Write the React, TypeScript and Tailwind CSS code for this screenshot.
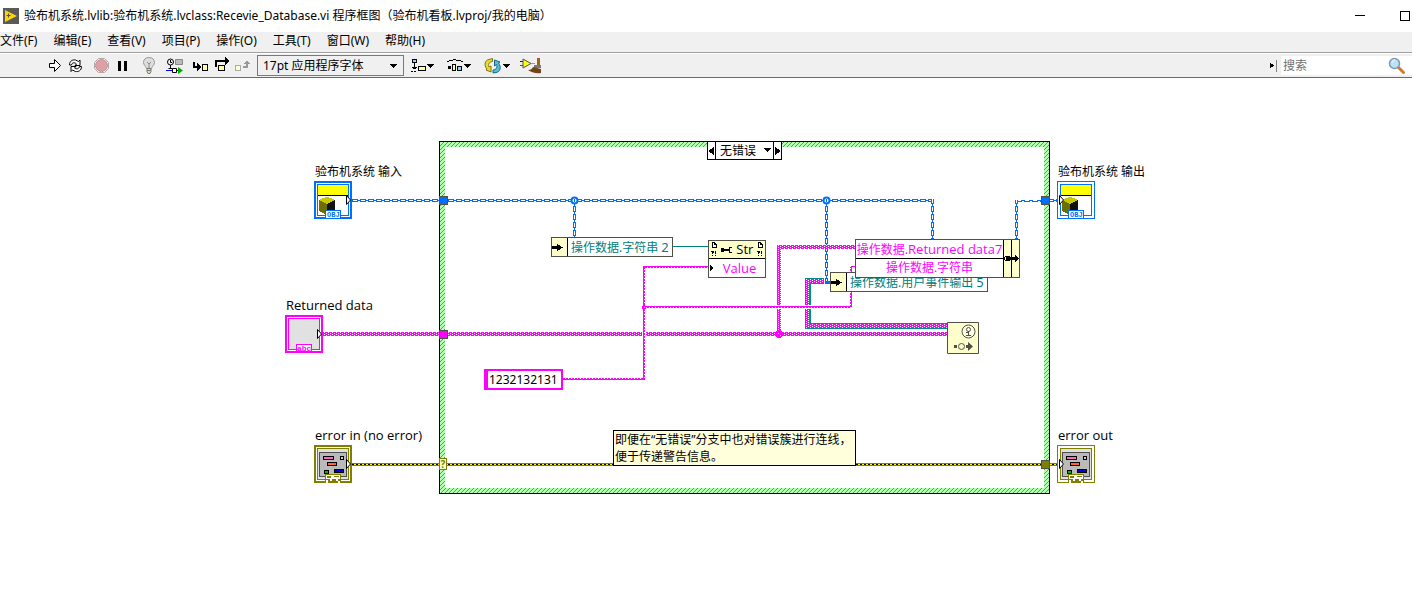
import React from 'react'

const MENUS = ['文件(F)', '编辑(E)', '查看(V)', '项目(P)', '操作(O)', '工具(T)', '窗口(W)', '帮助(H)']

type IconProps = { w: number; h?: number; smooth?: boolean; children: React.ReactNode }

function Icon({ w, h = 18, smooth, children }: IconProps) {
  return (
    <svg width={w} height={h} viewBox={`0 0 ${w} ${h}`} fill="none" shapeRendering={smooth ? 'auto' : 'crispEdges'} className="block shrink-0">
      {children}
    </svg>
  )
}

function Caret() {
  return <path d="M0 0h7v1H0zM1 1h5v1H1zM2 2h3v1H2zM3 3h1v1H3z" fill="#000" />
}

function TitleBar() {
  return (
    <header className="flex h-8 items-center bg-white pl-[3px] pr-0.5">
      <Icon w={16} h={16} smooth>
        <path d="M0 0h16v16H0z" fill="#5a5a5a" />
        <path d="M2 2v12l12-6z" fill="#ffd500" />
        <path d="M3.5 7.5h4M5.5 5.5v4" stroke="#4d5560" />
      </Icon>
      <h1 className="ml-[5px] flex-1 whitespace-nowrap text-[12px]">
        验布机系统.lvlib:验布机系统.lvclass:Recevie_Database.vi 程序框图（验布机看板.lvproj/我的电脑）
      </h1>
      <button aria-label="最小化" className="mr-[35px]">
        <Icon w={10} h={10}><path d="M0 4h10v1H0z" fill="#000" /></Icon>
      </button>
      <button aria-label="最大化">
        <Icon w={10} h={10}><path d="M.5 .5h9v9h-9z" stroke="#000" /></Icon>
      </button>
    </header>
  )
}

function MenuBar() {
  return (
    <nav className="flex h-[21px] items-center gap-4 border-b border-[#a0a0a0] bg-[#f0f0f0] pb-0.5 text-[12px]">
      {MENUS.map((m) => (
        <button key={m} className="whitespace-nowrap">{m}</button>
      ))}
    </nav>
  )
}

function Toolbar() {
  return (
    <div className="flex h-[25px] items-center border-b border-b-[#696969] border-t border-t-white bg-[#f0f0f0] pl-12">
      <button aria-label="运行">
        <Icon w={14} smooth>
          <path d="M1.5 6.5h5v-4l6 6-6 6v-4h-5z" fill="#fff" stroke="#000" />
        </Icon>
      </button>
      <button aria-label="连续运行" className="ml-[5px]">
        <Icon w={17} smooth>
          <path d="M2.5 8c0-4 3-5.500 6-5l3 1.500 1.500-1.500v5.500H8l1.500-1.500C7.500 5 5 5.500 4.500 8z" fill="#fff" stroke="#000" />
          <path d="M14.500 9.500c0 4-3 5.500-6 5l-3-1.500L4 14.500V9.500h5L7.500 11c2 1.500 4.500 1 5-1.500z" fill="#fff" stroke="#000" />
        </Icon>
      </button>
      <button aria-label="中止执行" className="ml-[9px]">
        <Icon w={17} smooth>
          <path d="M5.500 1.500h6l4 4v6l-4 4h-6l-4-4v-6z" fill="#fff" stroke="#aaa" />
          <circle cx="8.500" cy="8.500" r="6" fill="#dda0a4" stroke="#c98f94" />
        </Icon>
      </button>
      <button aria-label="暂停" className="ml-2">
        <Icon w={10}><path d="M0 4h3v10H0zM6 4h3v10H6z" fill="#000" /></Icon>
      </button>
      <button aria-label="高亮显示执行过程" className="ml-[14px]">
        <Icon w={14} smooth>
          <path d="M7 .5c-3.500 0-5.500 2-5.500 5 0 2.500 2 3 3 6h5c1-3 3-3.500 3-6 0-3-2-5-5.500-5z" fill="#ddd" stroke="#999" />
          <path d="M5 5l2 2 2-2M7 7v4" stroke="#888" />
          <path d="M5 11.500h4v3l-1 2H6l-1-2z" fill="#e8dca0" stroke="#777" />
          <path d="M5 13.500h4" stroke="#777" />
        </Icon>
      </button>
      <button aria-label="保存连线值" className="ml-[10px]">
        <Icon w={18} smooth>
          <circle cx="4.500" cy="5" r="3" stroke="#000" />
          <path d="M4.500 3v2.500H6M4.500 8v4M2.500 11.500h4" stroke="#000" />
          <path d="M9.500 2.500h7v5h-7z" fill="#bbb" stroke="#888" />
          <path d="M0 13.500h6M10 13.500h3" stroke="#00f" />
          <path d="M6.500 11.500h4v4h-4z" fill="#fff" stroke="#000" />
          <path d="M12 10l5 3.500-5 3.500z" fill="#00a800" />
        </Icon>
      </button>
      <button aria-label="开始单步执行" className="ml-2">
        <Icon w={18}>
          <path d="M1 5h2v4h3v2H1z" fill="#000" />
          <path d="M5 6v8l4-4z" fill="#000" />
          <path d="M10.500 7.500h5v6h-5z" fill="#ffffa0" stroke="#000" />
        </Icon>
      </button>
      <button aria-label="单步跳过" className="ml-1">
        <Icon w={18}>
          <path d="M1 3h11v2H3v5H1z" fill="#000" />
          <path d="M11 0v8l4-4z" fill="#000" />
          <path d="M4.500 8.500h6v5h-6z" fill="#ffffa0" stroke="#000" />
        </Icon>
      </button>
      <button aria-label="单步步出" className="ml-0.5">
        <Icon w={18}>
          <path d="M1.500 8.500h5v5h-5z" fill="#ffffcc" stroke="#aaa" />
          <path d="M9 11h5V7h2v-1h-1V5h-1V4h-2v1h-1v1h-1v1h2v2H9z" fill="#999" />
        </Icon>
      </button>
      <div className="relative ml-[5px]">
        <select aria-label="字体" className="block h-[21px] w-[147px] appearance-none border border-[#7a7a7a] bg-[#f0f0f0] pl-[5px] text-[12px] leading-[18px] outline-none">
          <option>17pt 应用程序字体</option>
        </select>
        <svg width="7" height="4" className="pointer-events-none absolute right-[7px] top-[9px]"><Caret /></svg>
      </div>
      <button aria-label="对齐对象" className="ml-[7px]">
        <Icon w={24}>
          <path d="M1.500 2.500h4v3h-4z" fill="#80e0ff" stroke="#000" />
          <path d="M3 6h1v6H3zM1 10h5v1H1zM2 11h3v1H2zM0 14h2v1H0zM3 14h2v1H3z" fill="#000" />
          <path d="M7.500 9.500h7v4h-7z" fill="#ffffa0" stroke="#000" />
          <g transform="translate(16 7)"><Caret /></g>
        </Icon>
      </button>
      <button aria-label="分布对象" className="ml-3">
        <Icon w={24}>
          <path d="M0 4h2V3h4V2h3v1h5v1h2v1h-2V4H9V3H6v1H2v1H0z" fill="#000" />
          <path d="M1 9h3v3H1z" fill="#000" />
          <path d="M5.500 7.500h3v6h-3z" fill="#ffffa0" stroke="#000" />
          <path d="M10.500 9.500h4v4h-4z" fill="#80e0ff" stroke="#000" />
          <g transform="translate(17 7)"><Caret /></g>
        </Icon>
      </button>
      <button aria-label="重新排序" className="ml-[13px]">
        <Icon w={26} smooth>
          <path d="M8.500 1.500v3C4.500 5 4 8 5 10l2-1v6l-5-2 1-1C-.5 8 1 3 5 2.500z" fill="#e8dc30" stroke="#7b7410" />
          <path d="M9 16v-3c4-.5 4.500-3.500 3.500-5.500L10.500 9V3l5.500 2-1.500 1c3 4 2 9-2.500 9.500z" fill="#58bcd8" stroke="#176880" />
          <g transform="translate(19 7)"><Caret /></g>
        </Icon>
      </button>
      <button aria-label="整理程序框图" className="ml-[10px]">
        <Icon w={22} smooth>
          <path d="M0 4.500h3" stroke="#00f" />
          <path d="M0 8.500h3" stroke="#f00" />
          <path d="M10 6.500h5" stroke="#f80" />
          <path d="M3 2v9l8-4.500z" fill="#ff0" stroke="#555" />
          <path d="M17 1h3v8h-3z" fill="#a06018" />
          <path d="M14 8h7v3h-7z" fill="#777" />
          <path d="M13 10l8 2v4c-5 1-10-1-13-3 3 0 4-1 5-3z" fill="#70441c" />
        </Icon>
      </button>
      <div className="flex-1" />
      <button aria-label="展开搜索">
        <Icon w={6} h={6}><path d="M0 0h1v5H0zM1 1h2v3H1zM3 2h1v1H3z" fill="#000" /></Icon>
      </button>
      <span className="h-3 w-px bg-[#808080]" />
      <div className="ml-1 flex h-[19px] w-[131px] items-center bg-white">
        <input aria-label="搜索" placeholder="搜索" className="w-[107px] bg-transparent pl-0.5 text-[12px] outline-none placeholder:text-[#707070]" />
        <Icon w={18} smooth>
          <path d="M10.500 10.500l5 5" stroke="#cf7b28" strokeWidth="3" strokeLinecap="round" />
          <circle cx="6.500" cy="6.500" r="5" fill="#b8e4fa" stroke="#8296b4" strokeWidth="1.500" />
          <path d="M4 6c0-2 1-3 3-3" stroke="#fff" />
        </Icon>
      </div>
    </div>
  )
}

/* structure border, wires and tunnels */
function Wires() {
  return (
    <svg className="absolute inset-0 h-full w-full" shapeRendering="crispEdges">
      <defs>
        <pattern id="hatch" width="4" height="4" patternUnits="userSpaceOnUse">
          <path d="M0 0h4v4H0z" fill="#b4ffb4" />
          <path d="M3 0h1v1h-1zM2 1h1v1h-1zM1 2h1v1h-1zM0 3h1v1h-1z" fill="#808080" />
        </pattern>
        <pattern id="objH" x="0" y="1" width="8" height="4" patternUnits="userSpaceOnUse">
          <path d="M0 0h6v3H0zM6 1h2v1H6z" fill="#0070f8" />
          <path d="M1 1h4v1H1z" fill="#fff" />
        </pattern>
        <pattern id="objV0" width="3" height="8" patternUnits="userSpaceOnUse">
          <path d="M0 0h3v6H0zM1 6h1v2H1z" fill="#0070f8" />
          <path d="M1 1h1v4H1z" fill="#fff" />
        </pattern>
        <pattern id="objV1" x="1" width="3" height="8" patternUnits="userSpaceOnUse">
          <path d="M0 0h3v6H0zM1 6h1v2H1z" fill="#0070f8" />
          <path d="M1 1h1v4H1z" fill="#fff" />
        </pattern>
        <pattern id="str" width="4" height="4" patternUnits="userSpaceOnUse">
          <path d="M0 0h4v4H0z" fill="#f0f" />
          <path d="M0 0h1v1H0zM2 1h1v1H2zM0 2h1v1H0zM2 3h1v1H2z" fill="#fff" />
        </pattern>
        <pattern id="err" y="1" width="4" height="3" patternUnits="userSpaceOnUse">
          <path d="M0 0h4v3H0z" fill="#808000" />
          <path d="M0 1h2v1H0z" fill="#000" />
          <path d="M2 1h2v1H2z" fill="#ff0" />
        </pattern>
      </defs>

      <path d="M439 63h611v353H439z" fill="#000" />
      <path d="M440 64h609v351H440z" fill="url(#hatch)" />
      <path d="M445 69h599v341H445z" fill="#fff" />

      {/* object wires */}
      <path d="M352 121h87v3h-87zM448 121h485v3H448zM1016 122h25v3h-25zM1050 121h8v3h-8z" fill="url(#objH)" />
      <path d="M573 124h3v35h-3zM825 124h3v80h-3z" fill="url(#objV0)" />
      <path d="M931 121h3v40h-3zM1015 122h3v39h-3z" fill="url(#objV1)" />
      <path d="M825 203h6v3h-6z" fill="#0070f8" />
      <g fill="#fff" stroke="#0070f8" strokeWidth="2" shapeRendering="auto">
        <circle cx="574.500" cy="122.500" r="3" />
        <circle cx="826.500" cy="122.500" r="3" />
      </g>
      <path d="M574 121h1v3h-1zM826 121h1v3h-1z" fill="#0070f8" />

      {/* user event refnum */}
      <path d="M824 203h-16v45h139" stroke="#008c8c" strokeWidth="6" fill="none" />
      <path d="M806 201h18v4h-14v41h137v4H806z" fill="url(#str)" />

      {/* string wires */}
      <path d="M323 254h116v4H323zM448 254h499v4H448zM777 167h4v87h-4zM777 167h79v4h-79z" fill="url(#str)" />
      <path d="M642 252h4v8h-4zM775 227h8v4h-8zM803 227h10v4h-10z" fill="#fff" />
      <g fill="none" stroke="#f0f">
        <path d="M563 301.500h81M643.500 302V188.500H708M644 228.500h207.500M851.500 229v-40.500h4" />
        <path d="M563 300.500h81M644.500 302V189M645 189.500h63M644 229.500h207M850.500 229v-40" strokeDasharray="2 1" />
      </g>
      <path d="M777 252h4v1h1v1h1v4h-1v1h-1v1h-4v-1h-1v-1h-1v-4h1v-1h1z" fill="#f0f" />
      <path d="M643 227h2v1h1v3h-1v1h-2v-1h-1v-3h1z" fill="#f0f" />
      <path d="M778 255h1v1h-1zM780 257h1v1h-1zM644 229h1v1h-1z" fill="#fff" />

      <path d="M673 168.500h35" stroke="#008080" />

      {/* error cluster */}
      <path d="M352 385h87v3h-87zM447 385h594v3H447zM1050 385h8v3h-8z" fill="url(#err)" />

      {/* tunnels */}
      <g stroke="#505046">
        <path d="M439.500 118.500h8v8h-8zM1041.500 118.500h8v8h-8z" fill="#0070f8" />
        <path d="M439.500 252.500h8v8h-8z" fill="#f0f" />
        <path d="M1041.500 382.500h8v8h-8z" fill="#808000" />
      </g>
    </svg>
  )
}

function Arrow({ flip }: { flip?: boolean }) {
  return <path d={flip ? 'M2.500 14.500v9l4-4.500z' : 'M32.500 14.500v9l4-4.500z'} fill="#fff" stroke="#000" shapeRendering="auto" />
}

function ObjectTerminal({ out }: { out?: boolean }) {
  return (
    <Icon w={38} h={38}>
      <path d="M0 0h38v38H0z" fill="#0070f8" />
      <path d={out ? 'M1 1h36v36H1z' : 'M2 2h34v34H2z'} fill="#fff" />
      <path d="M3.500 3.500h31v31h-31z" stroke="#0070f8" />
      <path d="M4 4h30v10H4z" fill="#ff0" />
      <path d="M4 14h30v1H4z" fill="#000" />
      <path d="M5 19l8-3.500 8 3.500-7 4.500z" fill="#c8c800" />
      <path d="M5 19l8 4v11l-8-4z" fill="#6e6e00" />
      <path d="M13 23l8-4v10l-8 5z" fill="#111" />
      <path d="M11.500 29.500h15v8h-15z" fill="#fff" stroke="#0070f8" />
      <text x="13" y="36" fontSize="7" fontFamily="Liberation Mono" fontWeight="bold" fill="#0070f8">OBJ</text>
      <Arrow flip={out} />
    </Icon>
  )
}

function StringTerminal() {
  return (
    <Icon w={38} h={38}>
      <path d="M0 0h38v38H0z" fill="#f0f" />
      <path d="M2 2h34v34H2z" fill="#fff" />
      <path d="M3.500 3.500h31v31h-31z" fill="#e1e1e1" stroke="#f0f" />
      <path d="M11.500 29.500h15v7h-15z" fill="#fff" stroke="#f0f" />
      <text x="12" y="36" fontSize="8" fontFamily="Liberation Mono" fontWeight="bold" fill="#f0f">abc</text>
      <Arrow />
    </Icon>
  )
}

function ErrorTerminal({ out }: { out?: boolean }) {
  return (
    <Icon w={38} h={38}>
      <path d="M0 0h38v38H0z" fill="#808000" />
      <path d={out ? 'M1 1h36v36H1z' : 'M2 2h34v34H2z'} fill="#fff" />
      <path d="M3.500 3.500h31v31h-31z" fill="#e1e1e1" stroke="#808000" />
      <path d="M5.500 7.500h27v24h-27z" fill="#bababa" stroke="#505050" />
      <g stroke="#000">
        <path d="M9.500 11.500h10v3h-10z" fill="#ff64c8" />
        <path d="M26.500 11.500h3v3h-3z" fill="#ccc" />
        <path d="M13.500 17.500h9v3h-9z" fill="#ff6432" />
        <path d="M10.500 25.500h4v3h-4z" fill="#00b400" />
        <path d="M20.500 24.500h9v3h-9z" fill="#00c" />
      </g>
      <path d="M11 29h16v9H11z" fill="#808000" />
      <path d="M12 30h14v4H12zM12 35h2v3h-2zM16 34h2v2h-2zM22 34h2v2h-2zM24 36h2v2h-2z" fill="#fff" />
      <path d="M13 31h4v2h-4zM20 31h5v1h-5z" fill="#808000" />
      <Arrow flip={out} />
    </Icon>
  )
}

function Unbundler({ label, index }: { label: string; index: string }) {
  return (
    <div className="flex h-5 border border-[#505046] bg-white text-[#008080]">
      <div className="flex w-4 items-center border-r border-black bg-[#ffffcc]">
        <Icon w={12} h={9}><path d="M0 3h5V1h1v1h2v1h1v1h2v1H9v1H8v1H6v1H5V6H0z" fill="#000" /></Icon>
      </div>
      <span className="whitespace-nowrap px-[3px] text-[12px] leading-[18px]">
        {label} <span className="text-[13px]">{index}</span>
      </span>
    </div>
  )
}

function PropertyNode() {
  return (
    <div className="w-[58px] border border-[#505046] bg-white font-['Open_Sans','Noto_Sans',sans-serif] text-[13px]">
      <div className="flex h-[18px] items-center justify-between border-b border-black bg-[#ffffcc] px-0.5">
        <Corner />
        <Icon w={12} h={8}><path d="M0 2h3v1h5V1h3v1H9v4h2v1H8V5H3v1H0z" fill="#000" /></Icon>
        <span className="leading-[17px]">Str</span>
        <Corner />
      </div>
      <div className="flex h-[18px] items-center">
        <Icon w={5} h={6}><path d="M1 0v6l4-3z" fill="#000" /></Icon>
        <span className="flex-1 text-center leading-[18px] text-[#f0f]">Value</span>
      </div>
    </div>
  )
}

function Corner() {
  return (
    <Icon w={6} h={15}>
      <path d="M1 0h3v1h1v1h1v4H1z" fill="#000" />
      <path d="M2 1h1v2h2v2H2z" fill="#fff" />
      <path d="M0 9h3v2H2v1H1v-2H0zM1 13h1v1H1zM4 9h1v3H4zM4 13h1v1H4z" fill="#000" />
    </Icon>
  )
}

function Bundler() {
  return (
    <div className="flex h-[39px] border border-[#505046] bg-white text-[#f0f]">
      <div className="w-[147px] whitespace-nowrap text-center text-[12px]">
        <div className="h-[19px] border-b border-black leading-[18px]">
          操作数据<span className="font-['Open_Sans','Noto_Sans',sans-serif] text-[13px]">.Returned data7</span>
        </div>
        <div className="leading-[18px]">操作数据.字符串</div>
      </div>
      <Icon w={16} h={37}>
        <path d="M0 0h16v37H0z" fill="#ffffcc" />
        <path d="M0 0h1v37H0zM8 0h1v37H8z" fill="#000" />
        <path d="M2 16h5v1h5v-2h1v1h1v1h1v1h1v1h-1v1h-1v1h-1v1h-1v-2H7v1H2v-1H1v-3h1z" fill="#000" />
        <path d="M2 17h1v3H2z" fill="#ffffcc" />
      </Icon>
    </div>
  )
}

function EventNode() {
  return (
    <Icon w={32} h={32} smooth>
      <path d="M.5 .5h31v31H.5z" fill="#ffffcc" stroke="#505046" />
      <g stroke="#505046">
        <circle cx="21.500" cy="9.500" r="6.500" fill="#ffffe6" />
        <circle cx="21.500" cy="7.500" r="2" />
        <path d="M21.500 9v5M19 13.500h5M19 10.500h2" />
        <circle cx="14.500" cy="24.500" r="3" />
      </g>
      <path d="M7 23h3v3H7zM19 23h2v-3l5 4.500-5 4.500v-3h-2z" fill="#505046" />
    </Icon>
  )
}

function CaseSelector() {
  return (
    <div className="flex h-[19px] w-[75px] border border-black bg-white">
      <button aria-label="上一分支" className="flex w-2 items-center border-r border-black">
        <Icon w={7} h={8}><path d="M6 0v8L0 4z" fill="#000" /></Icon>
      </button>
      <div className="relative flex-1">
        <select aria-label="分支" className="block h-[17px] w-full appearance-none bg-transparent pl-1 text-[12px] leading-[17px] outline-none">
          <option>无错误</option>
        </select>
        <svg width="7" height="4" className="pointer-events-none absolute right-0.5 top-1.5"><Caret /></svg>
      </div>
      <button aria-label="下一分支" className="flex w-2 items-center border-l border-black">
        <Icon w={7} h={8}><path d="M1 0v8l6-4z" fill="#000" /></Icon>
      </button>
    </div>
  )
}

function Caption({ children }: { children: string }) {
  return <span className="block whitespace-nowrap font-['Open_Sans','Noto_Sans',sans-serif] text-[13px]">{children}</span>
}

function Diagram() {
  return (
    <main className="relative min-h-[500px] flex-1 overflow-hidden bg-white text-[12px] leading-[18px]">
      <Wires />
      <div className="absolute left-[707px] top-[63px]"><CaseSelector /></div>

      <span className="absolute left-[315px] top-[85px] whitespace-nowrap">验布机系统 输入</span>
      <div className="absolute left-[314px] top-[103px]"><ObjectTerminal /></div>
      <span className="absolute left-[1058px] top-[85px] whitespace-nowrap">验布机系统 输出</span>
      <div className="absolute left-[1057px] top-[103px]"><ObjectTerminal out /></div>

      <div className="absolute left-[286px] top-[218px]"><Caption>Returned data</Caption></div>
      <div className="absolute left-[285px] top-[237px]"><StringTerminal /></div>

      <div className="absolute left-[315px] top-[348px]"><Caption>error in (no error)</Caption></div>
      <div className="absolute left-[314px] top-[367px]"><ErrorTerminal /></div>
      <div className="absolute left-[1058px] top-[348px]"><Caption>error out</Caption></div>
      <div className="absolute left-[1057px] top-[367px]"><ErrorTerminal out /></div>

      <div className="absolute left-[551px] top-[159px]"><Unbundler label="操作数据.字符串" index="2" /></div>
      <div className="absolute left-[708px] top-[162px]"><PropertyNode /></div>
      <div className="absolute left-[830px] top-[194px]"><Unbundler label="操作数据.用户事件输出" index="5" /></div>
      <div className="absolute left-[855px] top-[161px]"><Bundler /></div>
      <div className="absolute left-[947px] top-[244px]"><EventNode /></div>

      <input
        aria-label="字符串常量"
        defaultValue="1232132131"
        className="absolute left-[484px] top-[291px] h-[21px] w-[79px] border-2 border-l-4 border-[#f0f] bg-white pl-px text-[12px] outline-none"
      />

      <div className="absolute left-[439px] top-[380px] flex h-3 w-2 items-center justify-center border border-[#808000] bg-[#ffffcc] text-[10px] font-bold text-[#808000]">
        ?
      </div>

      <p className="absolute left-[613px] top-[352px] h-9 w-[243px] border border-black bg-[#ffffdc] pl-px leading-[17px]">
        即便在“无错误”分支中也对错误簇进行连线，
        <br />
        便于传递警告信息。
      </p>
    </main>
  )
}

export default function App() {
  return (
    <div className="flex min-h-screen flex-col bg-white font-['Noto_Sans','Noto_Sans_CJK_SC',sans-serif] text-black">
      <TitleBar />
      <MenuBar />
      <Toolbar />
      <Diagram />
    </div>
  )
}
